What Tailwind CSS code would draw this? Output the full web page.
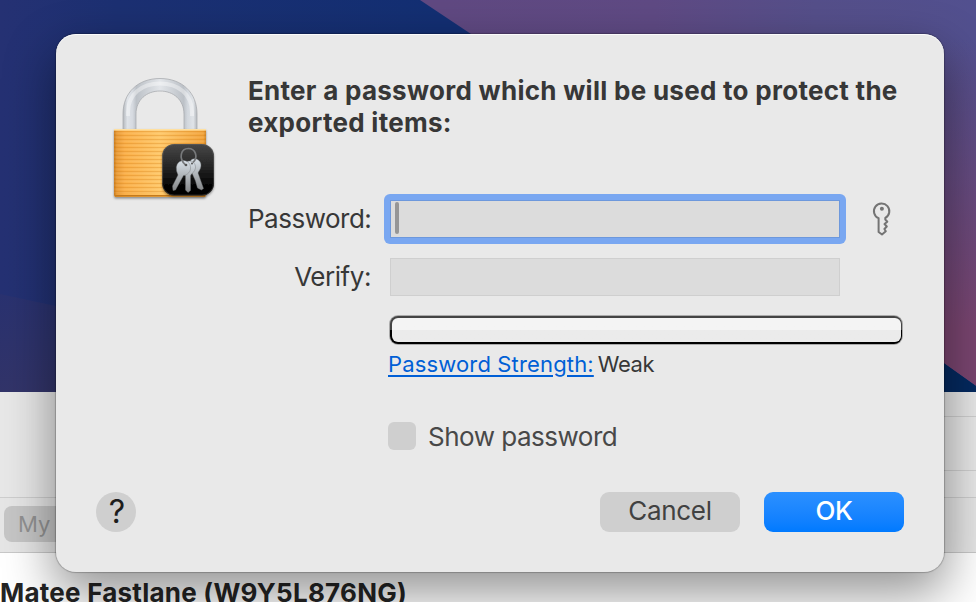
<!DOCTYPE html>
<html lang="en">
<head>
<meta charset="utf-8">
<title>Export items</title>
<script src="https://cdn.jsdelivr.net/npm/@tailwindcss/browser@4"></script>
</head>
<body class="relative h-[602px] w-[976px] overflow-hidden font-[Inter,sans-serif] text-[#373737]">
  <!-- Desktop wallpaper -->
  <svg class="absolute inset-0" width="976" height="392" viewBox="0 0 976 392" aria-hidden="true">
    <defs>
      <linearGradient id="navy" x1="0" y1="0" x2="1" y2="0"><stop offset="0" stop-color="#253173"/><stop offset=".12" stop-color="#1c3072"/><stop offset=".45" stop-color="#132f73"/></linearGradient>
      <linearGradient id="plum" gradientUnits="userSpaceOnUse" x1="440" y1="0" x2="976" y2="0"><stop offset="0" stop-color="#604982"/><stop offset=".4" stop-color="#5f4a84"/><stop offset=".7" stop-color="#554f8a"/><stop offset="1" stop-color="#52508f"/></linearGradient>
      <linearGradient id="rose" x1="0" y1="0" x2="0" y2="1"><stop offset=".1" stop-color="#7a4570" stop-opacity="0"/><stop offset=".85" stop-color="#7a4570"/></linearGradient>
      <linearGradient id="dusk" x1="0" y1="0" x2="0" y2="1"><stop offset="0" stop-color="#2a3270"/><stop offset="1" stop-color="#323469"/></linearGradient>
    </defs>
    <rect width="976" height="392" fill="url(#navy)"/>
    <path d="M0 294L130 322V392H0Z" fill="url(#dusk)"/>
    <path d="M420 0H976V386L944 363Q760 280 471 34Z" fill="url(#plum)"/>
    <path d="M900 0H976V386L900 332Z" fill="url(#rose)"/>
    <path d="M900 332L976 386V392H900Z" fill="#04295f"/>
  </svg>

  <!-- Window behind the dialog -->
  <div class="flex h-full flex-col pt-[391px]">
    <div class="flex h-[107px] shrink-0 flex-col border-b border-t border-b-[#cecece] border-t-white bg-[#e8e8e8]">
      <div class="ml-auto mt-[24px] h-[55px] w-[60px] border-y border-[#cfcfcf]"></div>
    </div>
    <div class="flex h-[55px] shrink-0 items-center border-b border-[#c8c8c8] bg-[#e6e6e6] pb-[2px] pl-1">
      <div class="flex h-9 w-[150px] items-center rounded-lg bg-[#c6c6c6] pl-[14px] text-[22px] text-[#929292]">My</div>
    </div>
    <div class="flex-1 bg-white pt-[25px]">
      <div class="whitespace-nowrap text-[26px] font-bold leading-[30px] tracking-[0.24px] text-[#242424]">Matee Fastlane (W9Y5L876NG)</div>
    </div>
  </div>

  <main class="absolute left-[56px] top-[34px] flex h-[538px] w-[888px] flex-col rounded-[20px] bg-[#e9e9e9] px-10 pb-10 pt-10 shadow-[inset_0_1px_0_0_rgba(255,255,255,0.8),0_0_1px_1px_rgba(0,0,0,0.22),0_20px_50px_2px_rgba(0,0,0,0.42)]">
    <div class="flex h-[418px]">
      <svg class="shrink-0" width="128" height="128" viewBox="0 0 128 128" role="img" aria-label="Keychain Access">
        <defs>
          <linearGradient id="steel" x1="0" y1="0" x2="1" y2="0"><stop offset="0" stop-color="#b4b8bd"/><stop offset=".06" stop-color="#dfe3e8"/><stop offset=".13" stop-color="#d6dae0"/><stop offset=".18" stop-color="#bcc1c7"/><stop offset=".5" stop-color="#e2e5e9"/><stop offset=".82" stop-color="#bcc1c7"/><stop offset=".87" stop-color="#d2d7dd"/><stop offset=".95" stop-color="#e0e4e8"/><stop offset="1" stop-color="#b4b8bd"/></linearGradient>
          <linearGradient id="brass" x1="0" y1="0" x2="1" y2="0"><stop offset="0" stop-color="#c87a1b"/><stop offset=".03" stop-color="#e99b38"/><stop offset=".12" stop-color="#fbb04a"/><stop offset=".5" stop-color="#ffc869"/><stop offset=".97" stop-color="#f3a53d"/><stop offset="1" stop-color="#ce8425"/></linearGradient>
          <pattern id="ridge" width="10" height="4" patternUnits="userSpaceOnUse"><rect y="1" width="10" height="1.2" fill="#d17c14" fill-opacity=".3"/><rect y="2.6" width="10" height="1" fill="#fff" fill-opacity=".1"/></pattern>
          <linearGradient id="tile" x1="0" y1="0" x2="0" y2="1"><stop offset="0" stop-color="#474747"/><stop offset=".45" stop-color="#242424"/><stop offset=".8" stop-color="#050505"/><stop offset="1" stop-color="#000"/></linearGradient>
          <linearGradient id="blade" x1="0" y1="0" x2="0" y2="1"><stop offset="0" stop-color="#d9e1e8"/><stop offset="1" stop-color="#858789"/></linearGradient>
          <filter id="soft" x="-20%" y="-20%" width="140%" height="140%"><feDropShadow dx="0" dy="1.5" stdDeviation="1.2" flood-opacity=".4"/></filter>
        </defs>
        <path d="M27 56V40C27 18.500 42 4.500 64 4.500S101 18.500 101 40V56H88V40C88 26 77.500 17 64 17S40 26 40 40V56Z" fill="url(#steel)" stroke="#a9acb0" stroke-width=".8"/>
        <path d="M32 42V38C32 20 46 9.500 64 9.500S96 20 96 38V42" fill="none" stroke="#fff" stroke-opacity=".4" stroke-width="4"/>
        <g filter="url(#soft)">
          <path d="M18 55H110V121Q110 123 108 123H20Q18 123 18 121Z" fill="url(#brass)"/>
        </g>
        <rect x="18" y="57" width="92" height="62" fill="url(#ridge)"/>
        <rect x="18" y="55" width="92" height="1.600" fill="#ffe0a0"/>
        <rect x="19" y="121" width="90" height="1.600" fill="#c47a1b"/>
        <g filter="url(#soft)"><rect x="66.200" y="70" width="51.800" height="51.500" rx="12" fill="url(#tile)"/></g>
        <rect x="66.600" y="70.400" width="51" height="50.700" rx="11.600" fill="none" stroke="#777" stroke-opacity=".45" stroke-width=".8"/>
        <g fill="url(#blade)" stroke="#6e7275" stroke-width=".4">
          <path d="M95 86C99 83 105 86 105 91C105 95 103 96.500 102 99L107.500 114.500L105.500 116L101.500 114L99.500 107L96 99Q91 92 95 86Z"/>
          <path d="M90 88C95 85 100 89 99.500 94C99 98 95 99.500 94.500 102V116.500L92 118.500L89.500 116V102Q84 94 90 88Z"/>
          <path d="M83 88C88 84 95.500 88 94.500 95C94 99 90 101.500 87.500 101.500L79.500 116L77 116.500L76.500 112L82 101Q78 92 83 88Z"/>
        </g>
        <path d="M89.500 91C82 84 85 74.500 92.300 74.500S102.500 83 97 88.500" fill="none" stroke="#77797b" stroke-width="1.700"/>
        <circle cx="90" cy="91" r="1.300" fill="#555"/><circle cx="96" cy="89.500" r="1" fill="#555"/>
      </svg>

      <div class="ml-6 w-[656px] pt-px">
        <h1 class="h-[119px] whitespace-nowrap text-[26px] font-bold leading-8 tracking-[0.28px]">Enter a password which will be used to protect the<br>exported items:</h1>

        <div class="flex h-[50px] items-center">
          <label class="w-[123px] whitespace-nowrap text-right text-[26px] leading-8 tracking-[-0.5px]">Password:</label>
          <div class="ml-[13px] h-[50px] w-[462px] rounded-[6px] bg-[#79a7f1] p-[6px]">
            <div class="h-[38px] border border-[#6d98dc] bg-[#dcdcdc] pl-1 pt-px"><div class="h-8 w-1 rounded-full bg-[#969696]"></div></div>
          </div>
          <svg class="ml-[25px]" width="22" height="36" viewBox="0 0 22 36" fill="none" stroke="#747474" stroke-width="2" stroke-linejoin="round" aria-label="Password assistant">
            <path d="M7.600 17.200A7.700 7.700 0 1 1 14.300 16.900V18.500L16.300 20.700L13.500 23L15.800 25.500L13.400 28L14.800 30.300L11 33.500L7.600 31Z"/>
            <circle cx="10.900" cy="7.700" r="2" fill="#747474" stroke="none"/>
          </svg>
        </div>

        <div class="mt-[14px] flex h-[38px] items-center">
          <label class="w-[123px] whitespace-nowrap text-right text-[26px] leading-8 tracking-[-0.45px]">Verify:</label>
          <div class="ml-[19px] h-[38px] w-[450px] border border-[#cfcfcf] bg-[#dcdcdc]"></div>
        </div>

        <div class="ml-[141px] mt-[19px] flex h-[30px] w-[514px] rounded-[9px] bg-[#aaa] p-px">
          <div class="flex flex-1 rounded-[8px] bg-linear-to-b from-[#444] from-50% to-black to-50% px-[1.5px] pb-[2px] pt-[1.5px]">
            <div class="flex-1 rounded-[6px] bg-linear-to-b from-[#f4f4f4] from-50% to-[#ebebeb] to-50%"></div>
          </div>
        </div>

        <div class="ml-[140px] mt-[4px] flex h-[30px] items-center whitespace-nowrap text-[22px]">
          <a class="text-[#005fd6] tracking-[0.15px] underline decoration-2 underline-offset-[3px]">Password Strength:</a><span class="ml-1 tracking-[-0.4px]">Weak</span>
        </div>

        <div class="ml-[140px] mt-[43px] flex h-[28px] items-center text-[26px] text-[#484848]">
          <div class="h-7 w-7 rounded-[6px] bg-[#cfcfcf]"></div><span class="ml-3 whitespace-nowrap tracking-[-0.5px]">Show password</span>
        </div>
      </div>
    </div>

    <div class="flex h-10 items-center text-[26px]">
      <button class="mr-auto flex h-10 w-10 items-center justify-center rounded-full bg-[#cfcfcf] pl-0.5 text-[32px] text-[#1d1d1d]">?</button>
      <button class="h-10 w-[140px] rounded-[9px] bg-[#cfcfcf] pb-[2px] leading-[38px] tracking-[-0.3px] text-[#414141]">Cancel</button>
      <button class="ml-6 h-10 w-[140px] rounded-[9px] bg-linear-to-b from-[#2b90ff] to-[#007aff] pb-[2px] font-medium leading-[38px] tracking-[-0.5px] text-white">OK</button>
    </div>
  </main>
</body>
</html>
